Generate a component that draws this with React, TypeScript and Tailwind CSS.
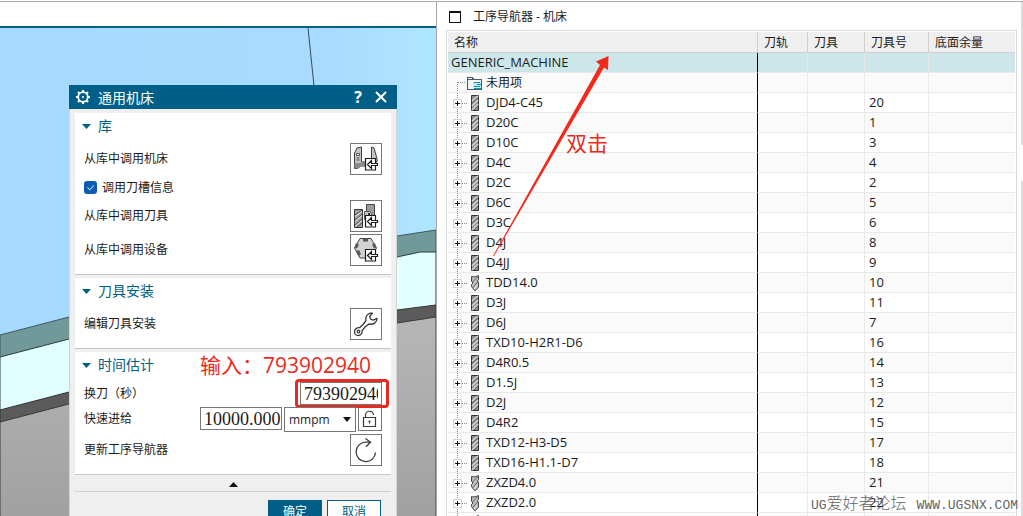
import type { ReactNode } from 'react';

type Tool = { name: string; no: string; kind: 'mill' | 'drill' };

const tools: Tool[] = [
  { name: 'DJD4-C45', no: '20', kind: 'mill' },
  { name: 'D20C', no: '1', kind: 'mill' },
  { name: 'D10C', no: '3', kind: 'mill' },
  { name: 'D4C', no: '4', kind: 'mill' },
  { name: 'D2C', no: '2', kind: 'mill' },
  { name: 'D6C', no: '5', kind: 'mill' },
  { name: 'D3C', no: '6', kind: 'mill' },
  { name: 'D4J', no: '8', kind: 'mill' },
  { name: 'D4JJ', no: '9', kind: 'mill' },
  { name: 'TDD14.0', no: '10', kind: 'drill' },
  { name: 'D3J', no: '11', kind: 'mill' },
  { name: 'D6J', no: '7', kind: 'mill' },
  { name: 'TXD10-H2R1-D6', no: '16', kind: 'mill' },
  { name: 'D4R0.5', no: '14', kind: 'mill' },
  { name: 'D1.5J', no: '13', kind: 'mill' },
  { name: 'D2J', no: '12', kind: 'mill' },
  { name: 'D4R2', no: '15', kind: 'mill' },
  { name: 'TXD12-H3-D5', no: '17', kind: 'mill' },
  { name: 'TXD16-H1.1-D7', no: '18', kind: 'mill' },
  { name: 'ZXZD4.0', no: '21', kind: 'drill' },
  { name: 'ZXZD2.0', no: '22', kind: 'drill' },
  { name: '', no: '', kind: 'drill' },
];

function Scene() {
  return (
    <svg className="absolute inset-0 w-full h-full" viewBox="0 0 436 488" preserveAspectRatio="none" aria-hidden="true">
      <defs>
        <linearGradient id="sky" x1="0" x2="1" y1="0" y2="0">
          <stop offset="0" stopColor="#a6d9ff" />
          <stop offset="0.75" stopColor="#a8dbff" />
          <stop offset="1" stopColor="#afe6ff" />
        </linearGradient>
        <linearGradient id="floor" x1="0" x2="0" y1="0" y2="1">
          <stop offset="0" stopColor="#b6b6b6" />
          <stop offset="1" stopColor="#a1a1a1" />
        </linearGradient>
      </defs>
      <rect width="436" height="488" fill="url(#sky)" />
      <path d="M308 0 L314 58" stroke="#3c4a55" fill="none" />
      <path d="M0 307 L69 289 L397 208 L436 202 V488 H0 Z" fill="#72999a" stroke="#3d5763" />
      <path d="M0 329 L69 311 L397 229 L420 224 L436 224 V488 H0 Z" fill="#e2ffff" stroke="#2d3b3b" />
      <path d="M0 382 L69 364 L397 282 L436 277 V488 H0 Z" fill="#5b5b5b" stroke="#2f3535" />
      <path d="M0 394 L69 376 L397 295 L436 289 V490 H0 Z" fill="url(#floor)" stroke="#3a3a3a" />
    </svg>
  );
}

function ImportBadge() {
  return (
    <g stroke="#1c1c1c" strokeWidth="1.2" fill="#fff">
      <path d="M15.5 15.5h10v11.5h-10z" />
      <path d="M17.5 21.5l4-4v3h6v2h-6v3z" />
    </g>
  );
}

function MachineIcon() {
  return (
    <svg className="w-8 h-8 -m-px" viewBox="0 0 32 32" aria-hidden="true">
      <path d="M4.5 10l2.5-5 4.500-1v15h10V4l2.500 1 3 10.500V19l-11 4h-5.500L8 25.500H4.500z" fill="#c4c4c4" stroke="#3f3f3f" />
      <path d="M4.5 20h17v3h-11L8 25.5H4.500z" fill="#8b8b8b" />
      <path d="M6.500 10.500h3v2h-3zM6.500 15h3M6.500 17h3" stroke="#555" fill="#fff" />
      <ImportBadge />
    </svg>
  );
}

function CutterIcon() {
  return (
    <svg className="w-8 h-8 -m-px" viewBox="0 0 32 32" aria-hidden="true">
      <path d="M4.5 9.500h8v18h-8z" fill="#a5a5a5" stroke="#333" />
      <path d="M5 15l7-5M5 20l7-6M5 25l7-6M7 27l5-4" stroke="#4b4b4b" />
      <path d="M5 16.500l7-5M5 21.500l7-6M5 26.500l7-6" stroke="#e6e6e6" />
      <path d="M16.500 4.500h8v15h-10v-7l2-2z" fill="#9b9b9b" stroke="#444" />
      <path d="M14.500 11.500h5l2 2v5h-7z" fill="#c7c7c7" stroke="#555" />
      <path d="M18 13h2v2h-2z" fill="#333" />
      <ImportBadge />
    </svg>
  );
}

function DeviceIcon() {
  return (
    <svg className="w-8 h-8 -m-px" viewBox="0 0 32 32" aria-hidden="true">
      <path d="M10 4.500h11l5.500 9.500-5.500 10H10L4.500 14z" fill="#d3d3d3" stroke="#444" />
      <path d="M13 4.500h5v3h-5zM6 9l3 1.500-2 4-2.500-1zM25 9l-3 1.500 2 4 2.500-1zM6 17l3-1 2 4-2.500 2.500z" fill="#5a5a5a" />
      <ImportBadge />
    </svg>
  );
}

function WrenchIcon() {
  return (
    <svg className="w-8 h-8 -m-px" viewBox="0 0 32 32" fill="none" stroke="#3a3a3a" strokeWidth="1.3" strokeLinejoin="round" aria-hidden="true">
      <path d="M22.500 5.200c-3-.7-6.500 1.600-6.700 5 0 1 .1 1.700.2 2.300L13 16.500l-3.500 3.200c-3-.2-5 1.800-5 4.200 0 2.200 1.800 3.600 3.700 3.600 2.500 0 4.300-2 3.900-4.800l3-3.700 3.800-3c4.200 1 8-1.500 8.200-5.600l-4 1.800-2.600-1.200-.8-2.500z" />
      <circle cx="8.500" cy="23.500" r="1.300" />
    </svg>
  );
}

function RefreshIcon() {
  return (
    <svg className="w-8 h-8 -m-px" viewBox="0 0 32 32" fill="none" stroke="#3a3a3a" strokeWidth="1.3" aria-hidden="true">
      <path d="M25.500 18.500a9.700 9.700 0 1 1-9.500-10.300h4.500" />
      <path d="M15.500 4.500l5 3.700-4.500 4.500" />
    </svg>
  );
}

function LockIcon() {
  return (
    <svg className="w-6 h-6 -m-px" viewBox="0 0 24 24" fill="none" stroke="#3a3a3a" strokeWidth="1.2" aria-hidden="true">
      <path d="M5.500 10.500h12v9h-12z" />
      <path d="M7.500 10.500V8c0-5 7.500-5 8 0" />
      <path d="M11.500 13.500v3M10.500 14.500h2" />
    </svg>
  );
}

function TreeGutter({ kind }: { kind: 'mill' | 'drill' | 'folder' }) {
  return (
    <svg className="w-[38px] h-[19px] shrink-0" viewBox="0 0 38 19" shapeRendering="crispEdges" aria-hidden="true">
      {kind === 'folder' ? (
        <>
          <path d="M9.500 9v10M10 9.500h8" stroke="#8a8a8a" strokeDasharray="1 1" fill="none" />
          <path d="M19.500 4.500h5l1 2h8v10h-14z" fill="#f2f2f2" stroke="#4c5a62" />
          <path d="M20 6.500h6" stroke="#4c5a62" />
          <path d="M25 9h8v7h-8z" fill="#bfe9f5" />
          <path d="M26 9.500h6M29 11.500h4M26 13.500h6M26 15.500h7" stroke="#1590b5" />
        </>
      ) : (
        <>
          <path d="M9.500 0v19M14 10.500h5" stroke="#8a8a8a" strokeDasharray="1 1" fill="none" />
          <path d="M5.500 6.500h8v8h-8z" fill="#fff" stroke="#d4d4d4" />
          <path d="M7 10.500h5M9.500 8v5" stroke="#111" />
        </>
      )}
      {kind === 'mill' && (
        <g shapeRendering="auto">
          <path d="M23.500 2.500h7v15h-7z" fill="#8f8f8f" stroke="#333" />
          <path d="M24 8l6-5M24 13l6-6M24 17l6-6" stroke="#d8d8d8" strokeWidth="1.5" />
          <path d="M24 10.500l6-6M26 17l4-4" stroke="#5a5a5a" />
        </g>
      )}
      {kind === 'drill' && (
        <g shapeRendering="auto">
          <path d="M23.500 3.500c2 1 5 0 7-1v4l-1 1.500 1 2v4l-3 3.500h-1l-3-4v-2l1.500-1.500-1.500-2z" fill="#bdbdbd" stroke="#444" />
          <path d="M24.500 9l5-5M25 14.500l5-6" stroke="#666" />
          <path d="M26 16l3.500-4" stroke="#eee" />
        </g>
      )}
    </svg>
  );
}

function Section({ title, children }: { title: string; children: ReactNode }) {
  return (
    <section className="bg-white border-b border-[#c6c6c6] pl-[9px] pr-[9px] pb-2 mb-[3px]">
      <h2 className="flex items-center gap-[7px] h-[26px] mb-1 -ml-0.5 text-sm text-[#00607f]">
        <svg className="w-[9px] h-[5px]" viewBox="0 0 9 5" aria-hidden="true">
          <path d="M0 0h9L4.500 5z" fill="#00607f" />
        </svg>
        {title}
      </h2>
      {children}
    </section>
  );
}

function ActionRow({ id, label, children }: { id: string; label: string; children: ReactNode }) {
  return (
    <div className="flex items-center justify-between h-8">
      <label htmlFor={id}>{label}</label>
      <button id={id} type="button" className="w-8 h-8 border border-[#777] bg-white">
        {children}
      </button>
    </div>
  );
}

function MachineDialog() {
  return (
    <div role="dialog" aria-label="通用机床" className="absolute left-[69px] top-[57px] w-[328px] bg-[#efefef] text-xs text-[#1b1b1b]">
      <header className="flex items-center h-6 px-1.5 bg-[#005f87] text-white">
        <svg className="w-4 h-4" viewBox="0 0 16 16" fill="none" stroke="#fff" aria-hidden="true">
          <circle cx="8" cy="8" r="4.8" strokeWidth="1.8" />
          <circle cx="8" cy="8" r="1" fill="#fff" stroke="none" />
          <path d="M8 1v2M8 13v2M1 8h2M13 8h2M3 3l1.500 1.500M11.500 11.500L13 13M3 13l1.500-1.500M11.500 4.500L13 3" strokeWidth="2" />
        </svg>
        <h1 className="ml-[7px] flex-1 pt-0.5 text-sm">通用机床</h1>
        <button type="button" aria-label="帮助" className="w-4 text-base leading-6 font-bold">?</button>
        <button type="button" aria-label="关闭" className="ml-[7px] mr-0.5 w-4 h-4">
          <svg viewBox="0 0 16 16" stroke="#fff" strokeWidth="2" aria-hidden="true">
            <path d="M3 3l10 10M13 3L3 13" />
          </svg>
        </button>
      </header>

      <div className="px-[5px] pt-1 border-x border-[#d5d5d5]">
        <Section title="库">
          <ActionRow id="load-machine" label="从库中调用机床"><MachineIcon /></ActionRow>
          <div className="flex items-center h-[25px]">
            <label className="flex items-center gap-[5px]">
              <span className="relative flex w-[13px] h-[13px]">
                <input type="checkbox" defaultChecked className="appearance-none w-[13px] h-[13px] rounded-[3px] bg-[#0a5cb4]" />
                <svg className="absolute inset-0 pointer-events-none" viewBox="0 0 13 13" fill="none" stroke="#fff" aria-hidden="true">
                  <path d="M3.500 6.500l2.200 2.300L10 4.500" />
                </svg>
              </span>
              调用刀槽信息
            </label>
          </div>
          <ActionRow id="load-tool" label="从库中调用刀具"><CutterIcon /></ActionRow>
          <div className="h-0.5" />
          <ActionRow id="load-device" label="从库中调用设备"><DeviceIcon /></ActionRow>
        </Section>

        <Section title="刀具安装">
          <ActionRow id="edit-mount" label="编辑刀具安装"><WrenchIcon /></ActionRow>
        </Section>

        <Section title="时间估计">
          <div className="flex items-center justify-between h-[23px] mb-0.5">
            <label htmlFor="change-time">换刀（秒）</label>
            <div className="relative">
              <input id="change-time" defaultValue="793902940" className="block w-[82px] h-[23px] border border-[#777] bg-white px-[3px] font-['Liberation_Serif',serif] text-lg" />
              {/* highlight round the value to type */}
              <span className="absolute -left-[5px] -right-[7px] -inset-y-[3px] border-[3px] border-[#ea2a20] rounded pointer-events-none" />
            </div>
          </div>
          <div className="flex items-start gap-0.5 h-[27px]">
            <label htmlFor="rapid" className="flex-1 leading-6">快速进给</label>
            <input id="rapid" defaultValue="10000.000" className="w-[82px] h-[23px] border border-[#777] bg-white pl-[3px] font-['Liberation_Serif',serif] text-lg" />
            <div className="relative">
              <select aria-label="单位" className="block appearance-none w-[72px] h-[25px] border border-[#777] bg-white pl-1">
                <option>mmpm</option>
              </select>
              <svg className="absolute right-[5px] top-[10px] w-2 h-[5px] pointer-events-none" viewBox="0 0 8 5" aria-hidden="true">
                <path d="M0 0h8L4 5z" fill="#111" />
              </svg>
            </div>
            <button type="button" aria-label="锁定" className="w-6 h-6 border border-[#777] bg-white"><LockIcon /></button>
          </div>
          <ActionRow id="refresh" label="更新工序导航器"><RefreshIcon /></ActionRow>
        </Section>

        <div className="flex justify-center h-[14px] pt-1 border-b border-[#cfcfcf]">
          <button type="button" aria-label="收起" className="w-[9px] h-[5px]">
            <svg viewBox="0 0 9 5" aria-hidden="true"><path d="M0 5h9L4.500 0z" fill="#111" /></svg>
          </button>
        </div>
        <footer className="flex justify-end gap-[5px] pt-2 pr-2.5 pb-2">
          <button type="button" className="w-[54px] h-6 bg-[#005f87] text-white">确定</button>
          <button type="button" className="w-[54px] h-6 border border-[#005f87] bg-white text-[#005f87]">取消</button>
        </footer>
      </div>

      <p className="absolute left-[131px] top-[264px] text-[21px] leading-8 text-[#ea2a20] whitespace-nowrap">输入：793902940</p>
    </div>
  );
}

function Navigator() {
  const head = 'h-[21px] p-0 pl-1.5 pt-0.5 leading-[18px] text-left font-normal bg-[#efefef] border-b border-[#cfcfcf]';
  const cell = 'p-0 border-b border-l border-[#e9e9e9]';
  return (
    <div className="flex-1 min-w-0">
      <h2 className="flex items-center gap-3 h-7 pt-0.5 pl-3 text-xs">
        <svg className="w-3 h-3" viewBox="0 0 12 12" shapeRendering="crispEdges" aria-hidden="true">
          <path d="M0.500 1h11v10.500h-11z" fill="#fff" stroke="#111" />
          <path d="M0 1h12" stroke="#111" strokeWidth="2" />
        </svg>
        工序导航器 - 机床
      </h2>
      <div className="ml-[9px] mr-1 p-px border border-[#d9d9d9]">
        <table className="w-full table-fixed border-separate border-spacing-0 text-[13px] leading-[19px]">
          <thead className="text-xs">
            <tr>
              <th className={head}>名称</th>
              <th className={`${head} w-[50px] border-l`}>刀轨</th>
              <th className={`${head} w-[57px] border-l`}>刀具</th>
              <th className={`${head} w-[64px] border-l`}>刀具号</th>
              <th className={`${head} w-[87px] border-l`}>底面余量</th>
            </tr>
          </thead>
          <tbody>
            <tr className="h-5 bg-[#cde6ea]">
              <td className="p-0 pl-[3px] border-b border-[#e9e9e9]">GENERIC_MACHINE</td>
              <td className="p-0 border-b border-l border-b-[#e9e9e9] border-l-black" />
              <td className={cell} />
              <td className={cell} />
              <td className={cell} />
            </tr>
            <tr className="h-5 bg-[#fafafa]">
              <td className="p-0 border-b border-[#e9e9e9]">
                <div className="flex h-[19px] text-xs leading-[19px]"><TreeGutter kind="folder" />未用项</div>
              </td>
              <td className="p-0 border-b border-l border-b-[#e9e9e9] border-l-black" />
              <td className={cell} />
              <td className={cell} />
              <td className={cell} />
            </tr>
            {tools.map((t, i) => (
              <tr key={i} className={i % 2 ? 'h-5 bg-[#fafafa]' : 'h-5 bg-white'}>
                <td className="p-0 border-b border-[#e9e9e9]">
                  <div className="flex h-[19px]"><TreeGutter kind={t.kind} />{t.name}</div>
                </td>
                <td className="p-0 border-b border-l border-b-[#e9e9e9] border-l-black" />
                <td className={cell} />
                <td className={`${cell} pl-1`}>{t.no}</td>
                <td className={cell} />
              </tr>
            ))}
          </tbody>
        </table>
      </div>
    </div>
  );
}

export default function App() {
  return (
    <main className="h-screen overflow-hidden bg-white pt-px text-[#1b1b1b] font-['Open_Sans','Noto_Sans_CJK_SC',sans-serif]">
      <div className="grid grid-cols-[437fr_586fr] grid-rows-[100%] h-full border-t border-[#a8a8a8]">
        <div className="min-w-0 flex flex-col border-r border-[#a8a8a8]">
          <div className="h-[26px] shrink-0 border-b-2 border-[#005f87]" />
          <div className="relative flex-1 min-h-0">
            <Scene />
            <MachineDialog />
          </div>
        </div>

        <div className="relative min-w-0 flex">
          <Navigator />
          <div className="w-0.5 flex flex-col">
            <div className="h-[143px] bg-[#dcdcdc]" />
            <div className="h-9" />
            <div className="flex-1 bg-[#dcdcdc]" />
          </div>

          {/* double-click hint */}
          <svg className="absolute left-0 top-0 w-[200px] h-[260px] pointer-events-none" viewBox="0 2 200 260" aria-hidden="true">
            <path d="M56 256L163 65l-4-3.500L171.500 56l-.5 14-4-2.500L57 256z" fill="#f5281c" />
          </svg>
          <p className="absolute left-[129px] top-[125px] text-[21px] leading-8 text-[#ea2a20]">双击</p>
          <p className="absolute right-[5px] bottom-0 flex items-center gap-2.5 text-base leading-5 font-light text-[#666] whitespace-nowrap font-['Liberation_Mono','Noto_Sans_CJK_SC',monospace]">
            <span><span className="text-[13px]">UG</span>爱好者论坛</span>
            <span className="text-[13px]">WWW.UGSNX.COM</span>
          </p>
        </div>
      </div>
    </main>
  );
}
